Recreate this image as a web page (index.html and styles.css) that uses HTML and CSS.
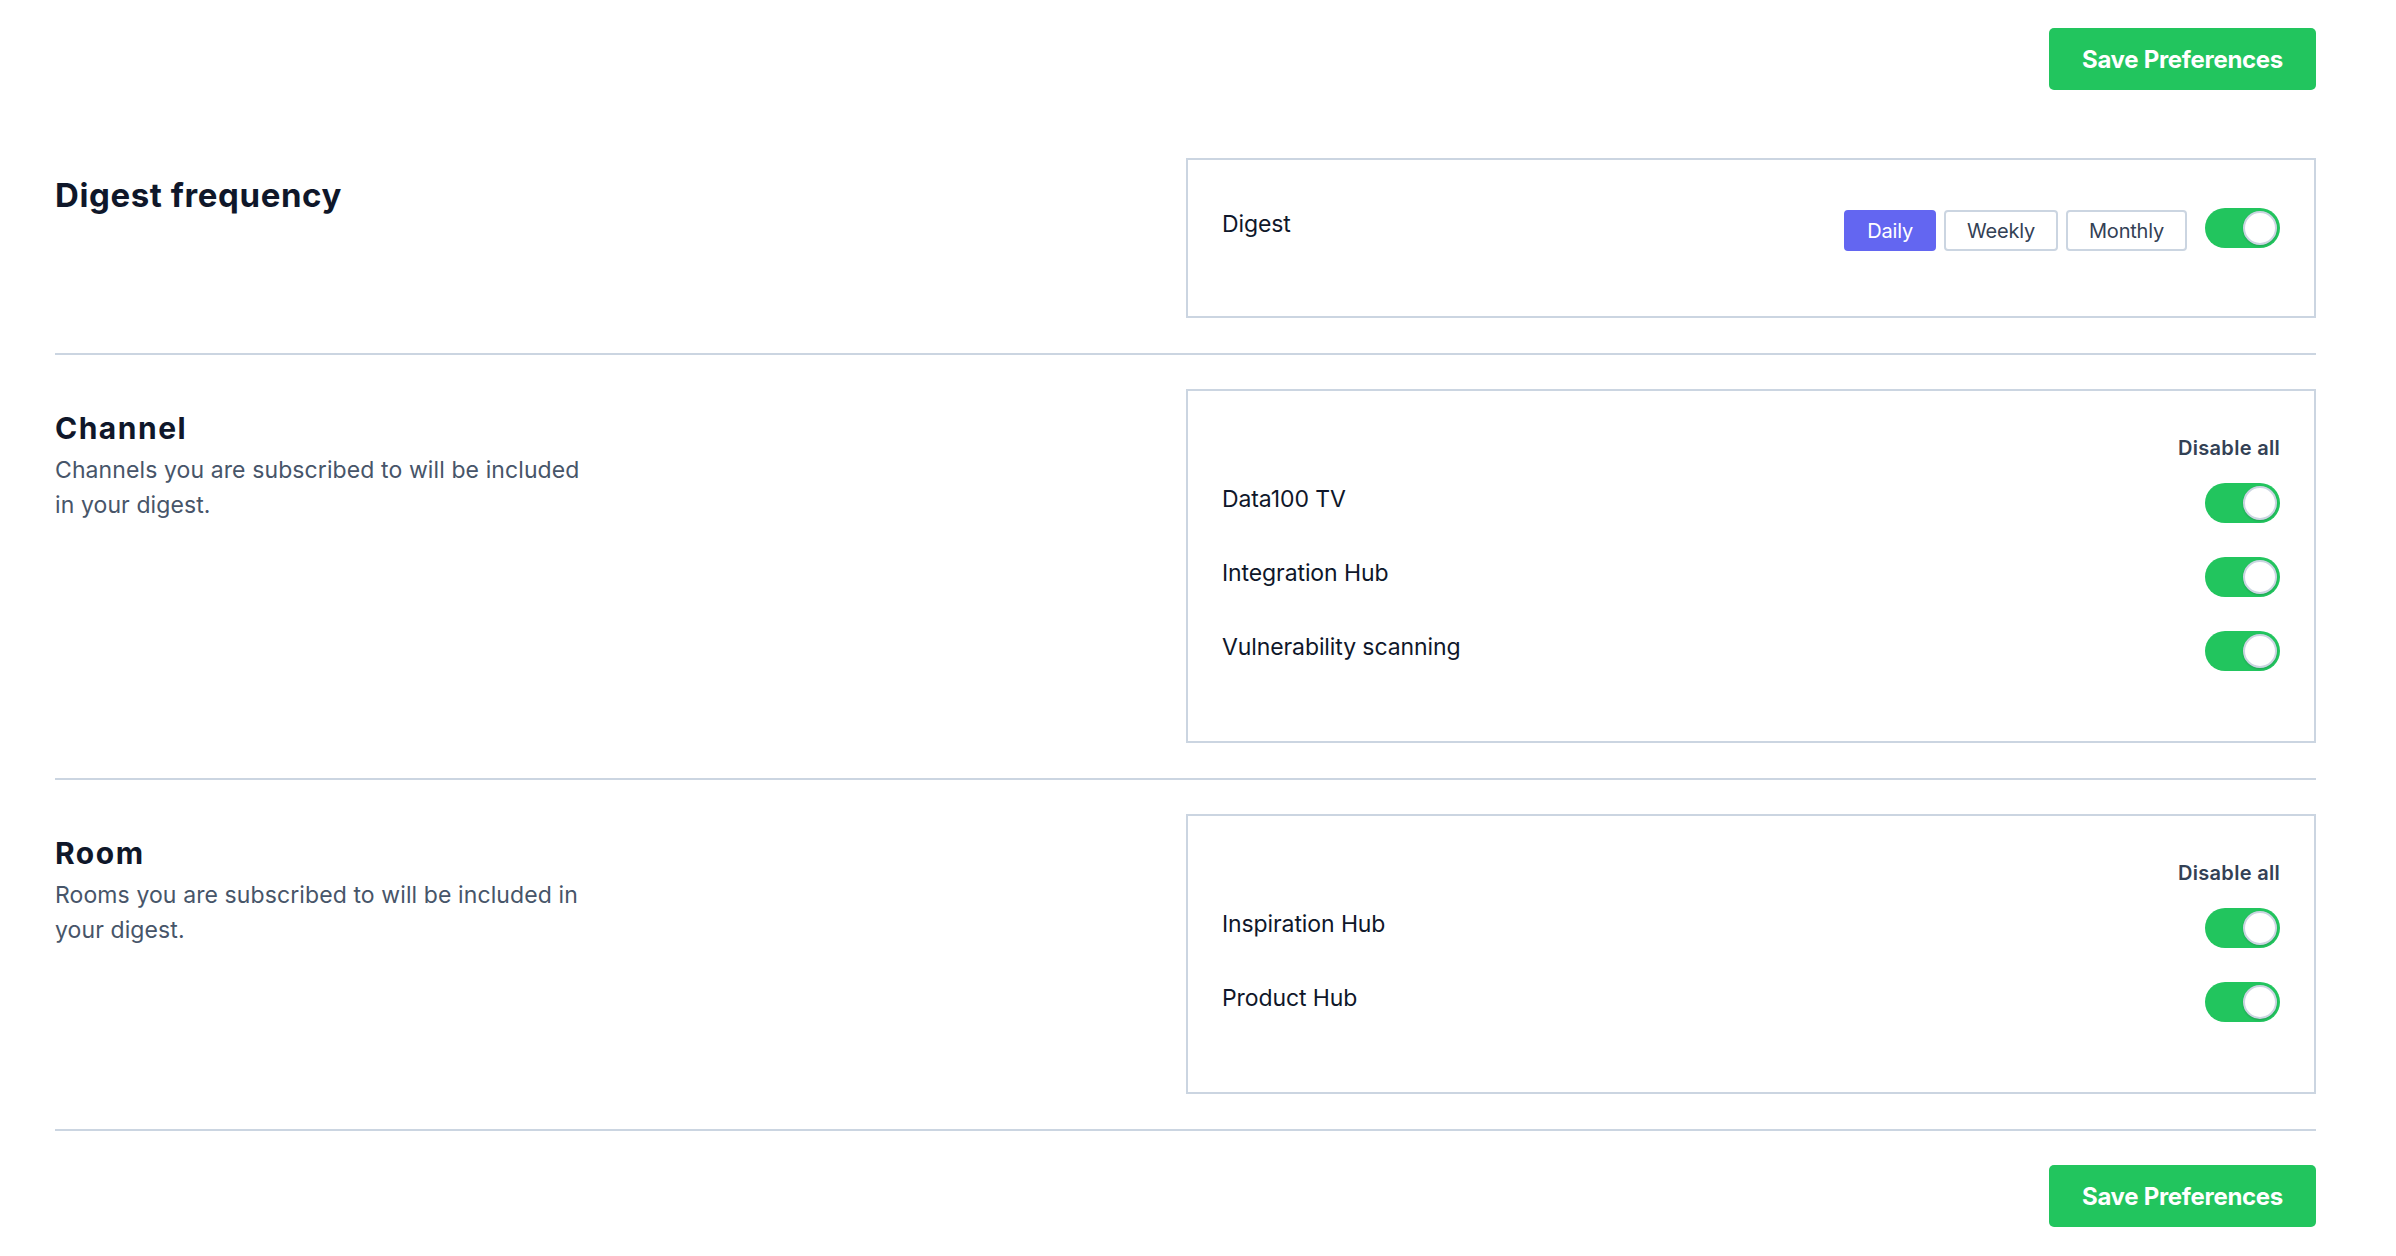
FILE: index.html
```html
<!DOCTYPE html>
<html lang="en">
<head>
<meta charset="utf-8">
<title>Notification preferences</title>
<link rel="stylesheet" href="styles.css">
</head>
<body>
<main class="page">
  <div class="actions actions--top">
    <button class="btn-save" type="button">Save Preferences</button>
  </div>

  <section class="pref-section">
    <div class="section-info section-info--lg">
      <h2 class="section-title section-title--lg">Digest frequency</h2>
    </div>
    <div class="card">
      <div class="row row--digest">
        <span class="row-label">Digest</span>
        <div class="row-controls">
          <div class="freq-group">
            <button class="freq-btn is-active" type="button">Daily</button>
            <button class="freq-btn" type="button">Weekly</button>
            <button class="freq-btn" type="button">Monthly</button>
          </div>
          <span class="toggle"><span class="knob"></span></span>
        </div>
      </div>
    </div>
  </section>

  <section class="pref-section">
    <div class="section-info">
      <h2 class="section-title">Channel</h2>
      <p class="section-desc">Channels you are subscribed to will be included in your digest.</p>
    </div>
    <div class="card">
      <div class="card-head"><button class="link-btn" type="button">Disable all</button></div>
      <div class="row"><span class="row-label">Data100 TV</span><span class="toggle"><span class="knob"></span></span></div>
      <div class="row"><span class="row-label">Integration Hub</span><span class="toggle"><span class="knob"></span></span></div>
      <div class="row"><span class="row-label">Vulnerability scanning</span><span class="toggle"><span class="knob"></span></span></div>
    </div>
  </section>

  <section class="pref-section">
    <div class="section-info">
      <h2 class="section-title">Room</h2>
      <p class="section-desc">Rooms you are subscribed to will be included in your digest.</p>
    </div>
    <div class="card">
      <div class="card-head"><button class="link-btn" type="button">Disable all</button></div>
      <div class="row"><span class="row-label">Inspiration Hub</span><span class="toggle"><span class="knob"></span></span></div>
      <div class="row"><span class="row-label">Product Hub</span><span class="toggle"><span class="knob"></span></span></div>
    </div>
  </section>

  <div class="actions actions--bottom">
    <button class="btn-save" type="button">Save Preferences</button>
  </div>
</main>
</body>
</html>
```

FILE: styles.css
```css
* { box-sizing: border-box; }

html, body {
  margin: 0;
  background: #ffffff;
}

body {
  font-family: "Inter", "Liberation Sans", sans-serif;
  color: #0f172a;
}

.page {
  padding: 28px 80px 31px 55px;
}

.actions {
  display: flex;
  justify-content: flex-end;
}

.actions--top { margin-bottom: 34px; }
.actions--bottom { margin-top: 34px; }

.btn-save {
  height: 62px;
  padding: 0 33px;
  border: none;
  border-radius: 5px;
  background: #22c55e;
  color: #ffffff;
  font-family: "Inter", "Liberation Sans", sans-serif;
  font-size: 24px;
  font-weight: 700;
  letter-spacing: -0.3px;
  cursor: pointer;
}

.pref-section {
  display: grid;
  grid-template-columns: 1fr 1130px;
  padding: 34px 0 35px;
  border-bottom: 2px solid #cbd5e1;
}

.section-info {
  padding-top: 21px;
}

.section-info--lg {
  padding-top: 17px;
}

.section-title {
  margin: 0;
  font-size: 30px;
  line-height: 36px;
  font-weight: 700;
  letter-spacing: 1.5px;
  color: #0f172a;
}

.section-title--lg {
  font-size: 33px;
  line-height: 40px;
  letter-spacing: 0.6px;
}

.section-desc {
  margin: 7px 0 0;
  max-width: 538px;
  font-size: 23px;
  line-height: 35px;
  color: #475569;
  letter-spacing: 0.1px;
}

.card {
  border: 2px solid #cbd5e1;
  padding: 36px 34px;
}

.card-head {
  display: flex;
  justify-content: flex-end;
  align-items: flex-start;
  height: 56px;
  padding-top: 6px;
}

.link-btn {
  padding: 0;
  border: none;
  background: none;
  font-family: "Inter", "Liberation Sans", sans-serif;
  font-size: 20px;
  line-height: 30px;
  font-weight: 600;
  letter-spacing: 0.3px;
  color: #334155;
  cursor: pointer;
}

.row {
  display: flex;
  justify-content: space-between;
  align-items: flex-start;
  margin-bottom: 34px;
}

.row--digest {
  padding-top: 12px;
  margin-bottom: 29px;
}

.row-label {
  margin-top: -2px;
  font-size: 23px;
  line-height: 36px;
  color: #0f172a;
  letter-spacing: -0.1px;
}

.row-controls {
  display: flex;
  align-items: flex-start;
  gap: 18px;
}

.freq-group {
  display: flex;
  gap: 8px;
  margin-top: 2px;
}

.freq-btn {
  height: 41px;
  padding: 0 21px;
  border: 2px solid #cbd5e1;
  border-radius: 4px;
  background: #ffffff;
  color: #334155;
  font-family: "Inter", "Liberation Sans", sans-serif;
  font-size: 20px;
  letter-spacing: -0.2px;
  cursor: pointer;
}

.freq-btn.is-active {
  background: #6366f1;
  border-color: #6366f1;
  color: #ffffff;
}

.toggle {
  position: relative;
  display: block;
  flex: none;
  width: 75px;
  height: 40px;
  border-radius: 20px;
  background: #22c55e;
}

.knob {
  position: absolute;
  top: 3px;
  right: 3px;
  width: 34px;
  height: 34px;
  border-radius: 50%;
  background: #ffffff;
  border: 2px solid #cbd5e1;
  box-shadow: 0 1px 2px rgba(15, 23, 42, 0.2);
}
```
